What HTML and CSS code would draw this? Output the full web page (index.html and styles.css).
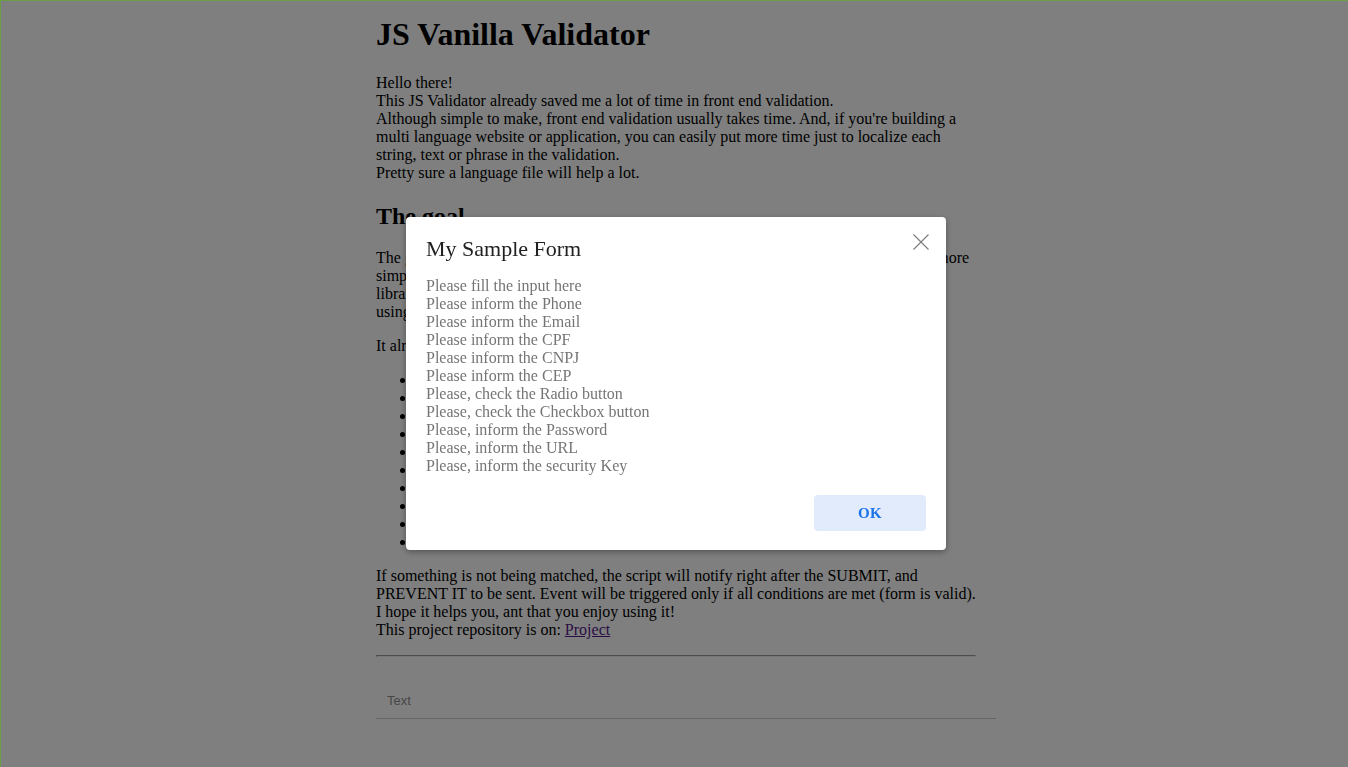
FILE: index.html
```html
<!DOCTYPE html>
<html lang="en">
<head>
<meta charset="utf-8">
<title>JS Vanilla Validator</title>
<link rel="stylesheet" href="styles.css">
</head>
<body>
<main class="content">
  <h1 class="title">JS Vanilla Validator</h1>
  <p class="text">Hello there!<br>This JS Validator already saved me a lot of time in front end validation.<br>Although simple to make, front end validation usually takes time. And, if you're building a multi language website or application, you can easily put more time just to localize each string, text or phrase in the validation.<br>Pretty sure a language file will help a lot.</p>
  <h2 class="subtitle">The goal</h2>
  <p class="text">The goal of this validator is to make the front end validation of your forms quicker and more simple, with a single language file that you can translate, without any other<br>library or framework. Just include the script and the language file, and start<br>using it on each input of your forms.</p>
  <p class="text">It already validates:</p>
  <ul class="list">
    <li>Required fields</li>
    <li>Phone</li>
    <li>Email</li>
    <li>CPF</li>
    <li>CNPJ</li>
    <li>CEP</li>
    <li>Radio buttons</li>
    <li>Checkbox buttons</li>
    <li>Password</li>
    <li>URL</li>
  </ul>
  <p class="text">If something is not being matched, the script will notify right after the SUBMIT, and PREVENT IT to be sent. Event will be triggered only if all conditions are met (form is valid).<br>I hope it helps you, ant that you enjoy using it!<br>This project repository is on: <a class="link" href="#">Project</a></p>
  <hr class="rule">
  <input class="field" type="text" placeholder="Text">
</main>

<div class="overlay">
  <div class="modal" role="dialog" aria-labelledby="modal-title">
    <div class="modal-head">
      <h3 class="modal-title" id="modal-title">My Sample Form</h3>
      <button class="close" type="button" aria-label="Close">
        <svg width="16" height="16" viewBox="0 0 16 16" aria-hidden="true"><path d="M0.5 0.5 L15.5 15.5 M15.5 0.5 L0.5 15.5" stroke="#7a7a7a" stroke-width="1.1" fill="none"/></svg>
      </button>
    </div>
    <div class="modal-body">
      Please fill the input here<br>
      Please inform the Phone<br>
      Please inform the Email<br>
      Please inform the CPF<br>
      Please inform the CNPJ<br>
      Please inform the CEP<br>
      Please, check the Radio button<br>
      Please, check the Checkbox button<br>
      Please, inform the Password<br>
      Please, inform the URL<br>
      Please, inform the security Key
    </div>
    <div class="modal-foot">
      <button class="ok" type="button">OK</button>
    </div>
  </div>
</div>
</body>
</html>
```
FILE: styles.css
```css
html, body {
  margin: 0;
  padding: 0;
}
body {
  font-family: "Liberation Serif", "Times New Roman", serif;
  font-size: 16px;
  line-height: 18px;
  color: #000;
  background: #fff;
}
.content {
  width: 600px;
  margin: 0 auto;
  padding: 16px 0 40px 4px;
  display: flow-root;
}
.title {
  font-size: 32px;
  line-height: 37px;
  font-weight: bold;
  margin: 0 0 21px;
}
.text {
  margin: 16px 0;
}
.title + .text {
  margin-top: 21px;
}
.subtitle {
  font-size: 24px;
  line-height: 28px;
  font-weight: bold;
  margin: 20px 0 19px;
}
.list {
  margin: 16px 0;
  padding-left: 40px;
}
.link {
  color: #551a8b;
}
.rule {
  margin: 8px 0;
}
.field {
  display: block;
  box-sizing: border-box;
  width: 620px;
  height: 54px;
  margin: 0;
  padding: 17px 11px 0;
  border: none;
  border-bottom: 1px solid #cccccc;
  background: transparent;
  font-family: "Liberation Sans", Arial, sans-serif;
  font-size: 13px;
  outline: none;
}
.field::placeholder {
  color: #8f8f8f;
}
.overlay {
  position: fixed;
  inset: 0;
  background: rgba(0, 0, 0, 0.5);
  border-top: 1px solid #6b9f47;
  border-left: 1px solid #6b9f47;
  display: flex;
  justify-content: center;
  align-items: flex-start;
  padding: 216px 0 0 3px;
}
.modal {
  width: 540px;
  box-sizing: border-box;
  background: #fff;
  border-radius: 4px;
  box-shadow: 0 2px 6px rgba(0, 0, 0, 0.35);
  padding: 19px 20px 19px;
  display: flex;
  flex-direction: column;
}
.modal-head {
  display: flex;
  justify-content: space-between;
  align-items: flex-start;
}
.modal-title {
  margin: 0;
  font-size: 22px;
  line-height: 25px;
  font-weight: normal;
  color: #212121;
}
.close {
  border: none;
  background: none;
  padding: 0;
  margin: -2px -3px 0 0;
  width: 16px;
  height: 16px;
  cursor: pointer;
  display: flex;
}
.modal-body {
  margin-top: 16px;
  color: #757575;
}
.modal-foot {
  display: flex;
  justify-content: flex-end;
  margin-top: 20px;
}
.ok {
  width: 112px;
  height: 36px;
  border: none;
  border-radius: 4px;
  background: #e1ebfc;
  color: #1a73e8;
  font-family: "Liberation Serif", "Times New Roman", serif;
  font-size: 15px;
  font-weight: bold;
  letter-spacing: 0.3px;
  cursor: pointer;
}
```
